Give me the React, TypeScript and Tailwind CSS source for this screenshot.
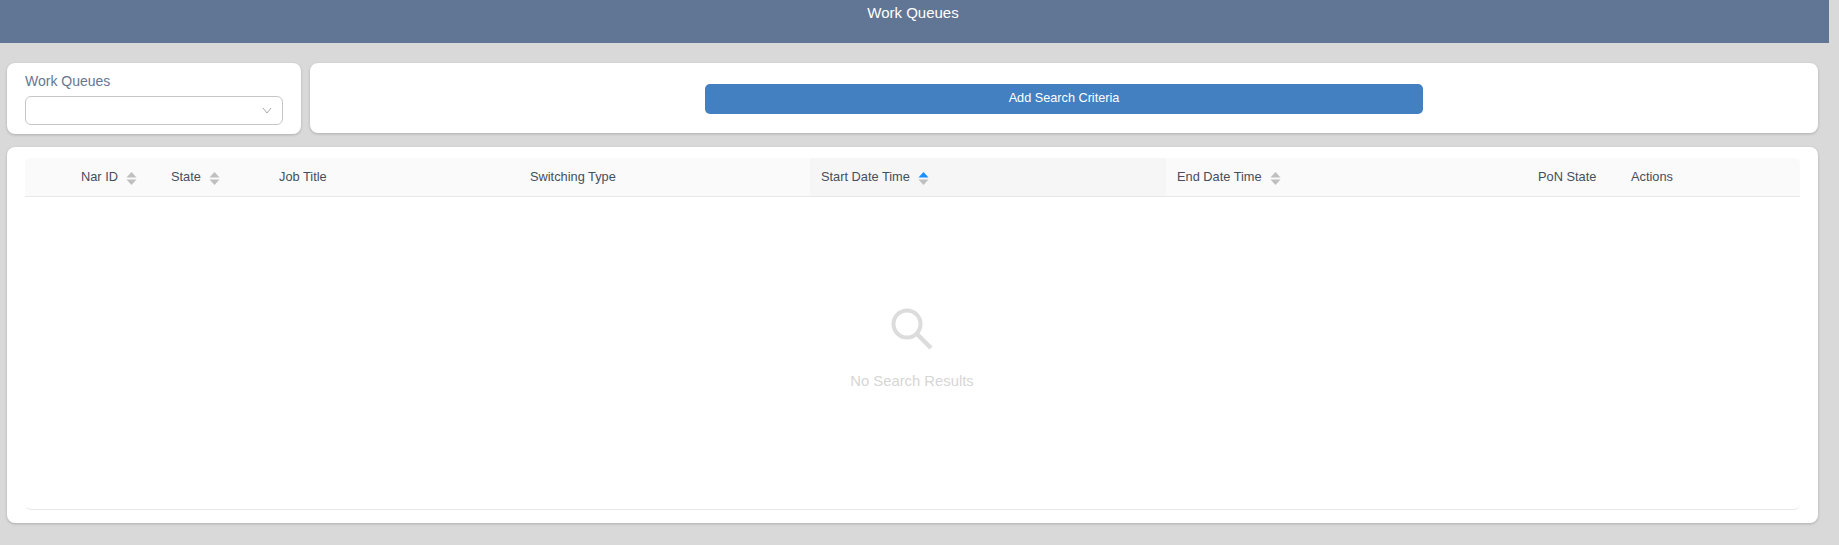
import React from "react";

interface Column {
    label: string;
    sortable?: boolean;
    active?: boolean;
}

const columns: Column[] = [
    { label: "" },
    { label: "Nar ID", sortable: true },
    { label: "State", sortable: true },
    { label: "Job Title" },
    { label: "Switching Type" },
    { label: "Start Date Time", sortable: true, active: true },
    { label: "End Date Time", sortable: true },
    { label: "PoN State" },
    { label: "Actions" },
];

const SortIcon: React.FC<{ active?: boolean }> = ({ active }) => (
    <svg width="11" height="15" viewBox="0 0 11 15" className="ml-[8px] shrink-0 mt-[3px]">
        <path d="M5.5 1 L10.5 6.5 L0.5 6.5 Z" fill={active ? "#1890ff" : "#bfbfbf"} />
        <path d="M0.5 8.5 L10.5 8.5 L5.5 14 Z" fill="#bfbfbf" />
    </svg>
);

const App: React.FC = () => {
    return (
        <div className="w-full h-[545px] overflow-hidden bg-[#d9d9d9] font-['Liberation_Sans',Arial,sans-serif]">
            {/* Page title bar */}
            <div className="w-[1829px] h-[43px] bg-[#607694] text-white text-center text-[15px] leading-[25px] pr-[3px]">
                Work Queues
            </div>

            <div className="w-[1811px] ml-[7px] mt-[20px]">
                <div className="flex gap-[9px] items-start">
                    <div className="w-[294px] h-[71px] bg-white rounded-lg shadow-[0_1px_3px_rgba(0,0,0,0.2)] px-[18px] pt-[8px]">
                        <div className="text-[14px] leading-[20px] text-[#657891]">Work Queues</div>
                        <div className="mt-[5px] h-[29px] border border-[#c6c6c6] rounded-md flex items-center justify-end pr-[10px]">
                            <svg width="10" height="7" viewBox="0 0 10 7" fill="none" stroke="#a8a8a8" strokeWidth="1">
                                <path d="M1 1 L5 6 L9 1" />
                            </svg>
                        </div>
                    </div>
                    <div className="flex-1 h-[70px] bg-white rounded-lg shadow-[0_1px_3px_rgba(0,0,0,0.2)] flex justify-center pt-[21px]">
                        <button className="w-[718px] h-[30px] bg-[#4280c1] rounded-[5px] text-white text-[12.7px]">
                            Add Search Criteria
                        </button>
                    </div>
                </div>

                <div className="mt-[13px] h-[376px] bg-white rounded-lg shadow-[0_1px_3px_rgba(0,0,0,0.2)] px-[18px] pt-[11px] flex flex-col">
                    <div className="grid grid-cols-[46px_90px_108px_251px_290px_356px_362px_93px_180px] h-[39px] bg-[#fafafa] border-b border-[#e8e8e8] rounded-t-md text-[12.8px] text-[#454e5c]">
                        {columns.map((col, i) => (
                            <div
                                key={i}
                                className={`flex items-center ${col.active ? "bg-[#f6f6f6] pl-[11px]" : i === 6 ? "pl-[11px]" : "pl-[10px]"}`}
                            >
                                <span>{col.label}</span>
                                {col.sortable && <SortIcon active={col.active} />}
                            </div>
                        ))}
                    </div>

                    {/* Empty state */}
                    <div className="h-[313px] border-b border-[#e8e8e8] rounded-b-md flex flex-col items-center pt-[111px] pr-[1px]">
                        <svg width="42" height="42" viewBox="0 0 42 42" fill="none" stroke="#dcdcdc" strokeWidth="4">
                            <circle cx="16" cy="16" r="13.5" />
                            <path d="M26 26 L40 40" strokeWidth="4.5" />
                        </svg>
                        <div className="mt-[21px] text-[14.8px] leading-[20px] text-[#d6d6d6]">No Search Results</div>
                    </div>
                </div>
            </div>
        </div>
    );
};

export default App;
